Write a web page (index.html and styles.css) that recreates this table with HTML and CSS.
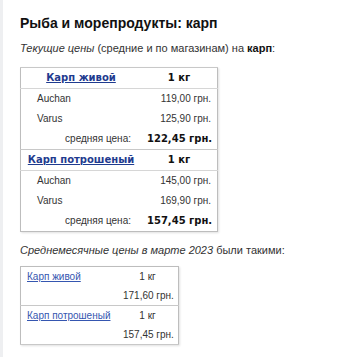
FILE: index.html
```html
<!DOCTYPE html>
<html>
<head>
    <meta charset="utf-8">
    <link rel="stylesheet" href="styles.css">
</head>
<body>
    <div class="page">
        <h1 class="title">Рыба и морепродукты: карп</h1>
        <p class="intro"><i>Текущие цены</i> (средние и по магазинам) на <b>карп</b>:</p>

        <table class="prices">
            <tr class="product">
                <td class="name"><a href="#">Карп живой</a></td>
                <td class="unit">1 кг</td>
            </tr>
            <tr class="shop">
                <td class="store">Auchan</td>
                <td class="price">119,00 грн.</td>
            </tr>
            <tr class="shop">
                <td class="store">Varus</td>
                <td class="price">125,90 грн.</td>
            </tr>
            <tr class="avg">
                <td class="avg-label">средняя цена:</td>
                <td class="avg-price">122,45 грн.</td>
            </tr>
            <tr class="product">
                <td class="name"><a href="#">Карп потрошеный</a></td>
                <td class="unit">1 кг</td>
            </tr>
            <tr class="shop">
                <td class="store">Auchan</td>
                <td class="price">145,00 грн.</td>
            </tr>
            <tr class="shop">
                <td class="store">Varus</td>
                <td class="price">169,90 грн.</td>
            </tr>
            <tr class="avg">
                <td class="avg-label">средняя цена:</td>
                <td class="avg-price">157,45 грн.</td>
            </tr>
        </table>

        <p class="intro month"><i>Среднемесячные цены в марте 2023</i> были такими:</p>

        <table class="monthly">
            <tr class="item">
                <td class="name"><a href="#">Карп живой</a></td>
                <td class="unit">1 кг</td>
            </tr>
            <tr class="sum">
                <td></td>
                <td class="price">171,60 грн.</td>
            </tr>
            <tr class="item">
                <td class="name"><a href="#">Карп потрошеный</a></td>
                <td class="unit">1 кг</td>
            </tr>
            <tr class="sum">
                <td></td>
                <td class="price">157,45 грн.</td>
            </tr>
        </table>
    </div>
</body>
</html>
```

FILE: styles.css
```css
body {
    margin: 0;
    background: #fff;
    font-family: "Liberation Sans", Arial, sans-serif;
    color: #333;
    height: 357px;
    border-left: 3px solid #eeeff1;
    box-sizing: border-box;
}
.page {
    padding: 13px 0 0 17px;
}
.title {
    margin: 0;
    font-size: 14px;
    line-height: 20px;
    font-weight: bold;
    color: #111;
}
.intro {
    margin: 7px 0 11px 0;
    font-size: 11px;
    line-height: 16px;
    color: #333;
}
.intro b {
    color: #111;
}
.intro.month {
    margin: 10px 0 8px 0;
}
table {
    border-collapse: collapse;
    border: 1px solid #bdbdbd;
    box-shadow: 1px 1px 2px rgba(0,0,0,0.12);
    font-size: 10px;
}
td {
    padding: 0 6px;
    height: 20px;
    line-height: 20px;
    white-space: nowrap;
}

/* current prices */
.prices {
    width: 198px;
    table-layout: fixed;
}
.prices .name {
    width: 108px;
    text-align: center;
}
.prices .product td {
    border-top: 1px solid #c8c8c8;
    border-bottom: 1px solid #d6d6d6;
    height: 19px;
}
.prices .name a {
    font-family: "DejaVu Sans", Verdana, sans-serif;
    font-weight: bold;
    color: #1f3b8f;
}
.prices .unit {
    text-align: center;
    font-family: "DejaVu Sans", Verdana, sans-serif;
    font-weight: bold;
    color: #111;
}
.prices .store {
    padding-left: 16px;
}
.prices .price {
    text-align: right;
}
.avg-label {
    text-align: right;
    padding-right: 10px;
}
.avg-price {
    text-align: right;
    font-family: "DejaVu Sans", Verdana, sans-serif;
    font-weight: bold;
    color: #111;
}

/* monthly averages */
.monthly {
    width: 159px;
    table-layout: fixed;
}
.monthly .name {
    width: 84px;
}
.monthly .name a {
    color: #3556b0;
}
.monthly td {
    height: 19px;
    line-height: 19px;
}
.monthly .item + .sum td {
    border-bottom: 1px solid #c8c8c8;
}
.monthly .unit {
    text-align: center;
}
.monthly .price {
    text-align: right;
}
```
